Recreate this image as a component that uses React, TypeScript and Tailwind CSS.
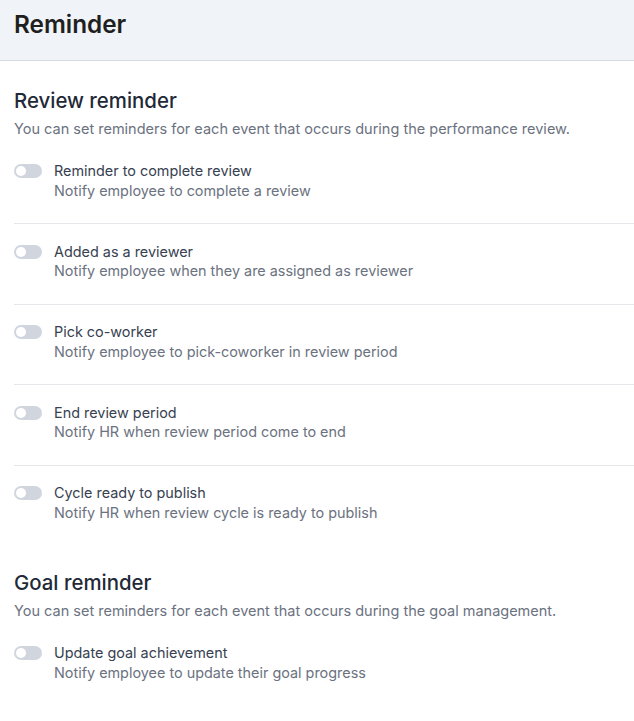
const review = [
  { title: 'Reminder to complete review', desc: 'Notify employee to complete a review' },
  { title: 'Added as a reviewer', desc: 'Notify employee when they are assigned as reviewer' },
  { title: 'Pick co-worker', desc: 'Notify employee to pick-coworker in review period' },
  { title: 'End review period', desc: 'Notify HR when review period come to end' },
  { title: 'Cycle ready to publish', desc: 'Notify HR when review cycle is ready to publish' },
];

const goal = [
  { title: 'Update goal achievement', desc: 'Notify employee to update their goal progress' },
];

function Toggle() {
  return (
    <div className="w-[28px] h-[14px] rounded-full bg-[#d1d6de] flex items-center px-[2px] shrink-0 mt-[3px]">
      <div className="w-[10px] h-[10px] rounded-full bg-white" />
    </div>
  );
}

function Row({ title, desc, last }: { title: string; desc: string; last: boolean }) {
  return (
    <div className={`flex gap-3 pt-[17.5px] ${last ? 'pb-0' : 'pb-[23px] border-b border-[#e5e7eb]'}`}>
      <Toggle />
      <div className="text-[14.4px] leading-[19.5px]">
        <div className="text-[#374151]">{title}</div>
        <div className="text-[#6b7280]">{desc}</div>
      </div>
    </div>
  );
}

function Section({ heading, sub, items }: { heading: string; sub: string; items: { title: string; desc: string }[] }) {
  return (
    <div>
      <h2 className="text-[20.4px] leading-[28px] font-medium text-[#1f2937]">{heading}</h2>
      <p className="text-[14.5px] leading-[20px] text-[#6b7280] mt-[4px]">{sub}</p>
      <div className="mt-[4.5px]">
        {items.map((it, i) => (
          <Row key={it.title} title={it.title} desc={it.desc} last={i === items.length - 1} />
        ))}
      </div>
    </div>
  );
}

export default function App() {
  return (
    <div className="min-h-screen bg-white" style={{ fontFamily: 'Inter, "Noto Sans", sans-serif' }}>
      <div className="h-[61px] bg-[#f0f3f8] border-b border-[#d6dbe3] px-[14px] pt-[8px]">
        <h1 className="text-[24.3px] leading-[32px] font-semibold text-[#1f1f1f]">Reminder</h1>
      </div>
      <div className="pl-[14px] pt-[26px] flex flex-col gap-[47px]">
        <Section
          heading="Review reminder"
          sub="You can set reminders for each event that occurs during the performance review."
          items={review}
        />
        <Section
          heading="Goal reminder"
          sub="You can set reminders for each event that occurs during the goal management."
          items={goal}
        />
      </div>
    </div>
  );
}
